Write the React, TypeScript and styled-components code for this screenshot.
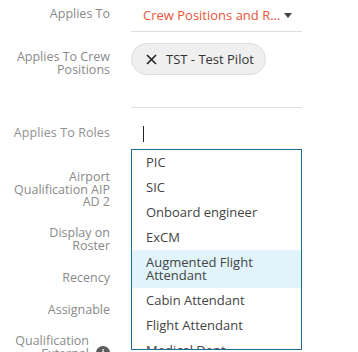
import React from 'react';
import styled, { createGlobalStyle } from 'styled-components';

const GlobalStyle = createGlobalStyle`
    html, body {
        margin: 0;
        padding: 0;
        background: #ffffff;
        font-family: "Open Sans", "Liberation Sans", sans-serif;
        overflow: hidden;
    }
`;

const Form = styled.div`
    width: 358px;
    height: 352px;
    overflow: hidden;
`;

const Row = styled.div<{ $h: number }>`
    display: grid;
    grid-template-columns: 110px 171px;
    column-gap: 21px;
    align-items: start;
    height: ${props => props.$h}px;
    position: relative;
`;

const Label = styled.div<{ $pt: number; $light?: boolean }>`
    padding: ${props => props.$pt}px 0 0 10px;
    text-align: right;
    font-size: 12.5px;
    line-height: 12.5px;
    color: ${props => props.$light ? '#919191' : '#8a8a8a'};
    letter-spacing: ${props => props.$light ? '0.1px' : '0'};
`;

const LabelWithIcon = styled(Label)`
    display: flex;
    justify-content: flex-end;
    align-items: flex-end;
    gap: 7px;
`;

const InfoIcon = styled.span`
    flex: none;
    width: 14px;
    height: 14px;
    border-radius: 50%;
    background: #5a5a5a;
    color: #ffffff;
    font-size: 10px;
    font-weight: 700;
    line-height: 14px;
    text-align: center;
`;

const Field = styled.div<{ $h: number }>`
    height: ${props => props.$h}px;
    border-bottom: 1px solid #dedede;
    box-sizing: border-box;
    position: relative;
`;

const SelectValue = styled.div`
    display: flex;
    align-items: center;
    gap: 4px;
    padding: 7px 0 0 12px;
    font-size: 13px;
    line-height: 16px;
    color: #e9553a;
`;

const Caret = styled.span`
    width: 0;
    height: 0;
    border-left: 4.5px solid transparent;
    border-right: 4.5px solid transparent;
    border-top: 5px solid #444444;
`;

const Chip = styled.div`
    display: inline-flex;
    align-items: center;
    gap: 9px;
    margin-top: 11px;
    height: 32px;
    box-sizing: border-box;
    padding: 0 11px 0 14px;
    border: 1px solid #dcdcdc;
    border-radius: 16px;
    background: #efefef;
    font-size: 13px;
    color: #333333;
`;

const RolesField = styled.div`
    position: relative;
`;

const Cursor = styled.span`
    display: block;
    margin: 18px 0 0 12px;
    width: 1px;
    height: 16px;
    background: #222222;
`;

const Menu = styled.ul`
    position: absolute;
    left: 0;
    top: 41px;
    width: 171px;
    height: 201px;
    box-sizing: border-box;
    margin: 0;
    padding: 0;
    list-style: none;
    border: 1px solid #1d6e92;
    background: #ffffff;
    overflow: hidden;
    z-index: 2;
`;

const MenuItem = styled.li<{ $active?: boolean }>`
    padding: 6px 12px 6px 14px;
    font-size: 13px;
    line-height: 13px;
    color: #444444;
    background: ${props => props.$active ? '#e1f4fb' : 'transparent'};
`;

const roles = [
    'PIC',
    'SIC',
    'Onboard engineer',
    'ExCM',
    'Augmented Flight Attendant',
    'Cabin Attendant',
    'Flight Attendant',
    'Medical Dept',
];

export default function App() {
    return (
        <Form>
            <GlobalStyle />
            <Row $h={32}>
                <Label $pt={8}>Applies To</Label>
                <Field $h={32}>
                    <SelectValue>
                        Crew Positions and R...
                        <Caret />
                    </SelectValue>
                </Field>
            </Row>
            <Row $h={76}>
                <Label $pt={19}>Applies To Crew Positions</Label>
                <Field $h={76}>
                    <Chip>
                        <svg width="11" height="11" viewBox="0 0 11 11">
                            <path d="M1 1 L10 10 M10 1 L1 10" stroke="#222" strokeWidth="1.6" />
                        </svg>
                        TST - Test Pilot
                    </Chip>
                </Field>
            </Row>
            <Row $h={63}>
                <Label $pt={19} $light>Applies To Roles</Label>
                <RolesField>
                    <Cursor />
                    <Menu>
                        {roles.map(role => (
                            <MenuItem key={role} $active={role === 'Augmented Flight Attendant'}>
                                {role}
                            </MenuItem>
                        ))}
                    </Menu>
                </RolesField>
            </Row>
            <Row $h={56}>
                <Label $pt={0}>Airport Qualification AIP AD 2</Label>
            </Row>
            <Row $h={45}>
                <Label $pt={0}>Display on Roster</Label>
            </Row>
            <Row $h={32}>
                <Label $pt={0}>Recency</Label>
            </Row>
            <Row $h={31}>
                <Label $pt={0}>Assignable</Label>
            </Row>
            <Row $h={40}>
                <LabelWithIcon $pt={0}>
                    <span>Qualification External</span>
                    <InfoIcon>i</InfoIcon>
                </LabelWithIcon>
            </Row>
        </Form>
    );
}
